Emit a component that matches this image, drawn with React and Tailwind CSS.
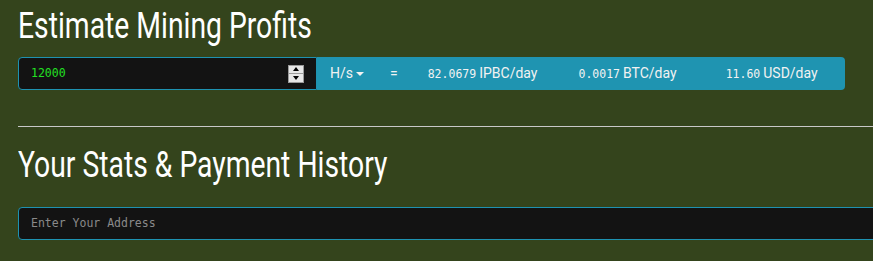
const MONO = "font-['DejaVu_Sans_Mono',monospace]"

function Spinner() {
    // old-style number spinner, drawn by hand
    return (
        <div className="flex flex-col w-[16px] h-[18px] border border-[#9a9a9a] bg-[#e6e6e6]">
            <div className="flex-1 flex items-center justify-center border-b border-[#9a9a9a]">
                <span className="w-0 h-0 border-x-[3px] border-x-transparent border-b-[4px] border-b-black" />
            </div>
            <div className="flex-1 flex items-center justify-center">
                <span className="w-0 h-0 border-x-[3px] border-x-transparent border-t-[4px] border-t-black" />
            </div>
        </div>
    )
}

function Amount({ value, unit, className = '' }) {
    return (
        <span className={`flex items-baseline ${className}`}>
            <span className={`${MONO} text-[11.5px] mr-[3px]`}>{value}</span>
            <span className="text-[14px]">{unit}</span>
        </span>
    )
}

export default function App() {
    return (
        <div className="w-full h-[261px] overflow-hidden bg-[#34441c] font-['Roboto',sans-serif] text-white">
            <div className="w-[900px] pl-[18px] pt-[6px]">
                <h1 className="text-[36px] leading-[40px] font-normal origin-left scale-x-[0.786] w-fit">
                    Estimate Mining Profits
                </h1>

                {/* estimate row */}
                <div className="mt-[11px] flex w-[827px] h-[33px]">
                    <div className="w-[299px] flex items-center justify-between bg-[#131313] border border-[#1e92b1] rounded-l-[4px] pl-[12px] pr-[12px]">
                        <span className={`${MONO} text-[11.5px] text-[#22e022]`}>12000</span>
                        <Spinner />
                    </div>
                    <div className="flex-1 flex items-center bg-[#1f94b1] rounded-r-[4px] text-[#f2f2f2]">
                        <span className="ml-[13px] flex items-center text-[14px]">
                            H/s
                            <span className="ml-[3px] w-0 h-0 border-x-[4px] border-x-transparent border-t-[4px] border-t-[#f2f2f2]" />
                        </span>
                        <span className="ml-[26px] text-[14px]">=</span>
                        <Amount value="82.0679" unit="IPBC/day" className="ml-[30px]" />
                        <Amount value="0.0017" unit="BTC/day" className="ml-[41px]" />
                        <Amount value="11.60" unit="USD/day" className="ml-[49px]" />
                    </div>
                </div>

                <hr className="mt-[36px] border-0 h-px bg-[#c8c8c8]" />

                <h2 className="mt-[18px] text-[36px] leading-[40px] font-normal origin-left scale-x-[0.786] w-fit">
                    Your Stats &amp; Payment History
                </h2>

                <div className="mt-[22px] h-[33px] flex items-center bg-[#131313] border border-[#1e92b1] rounded-[4px] pl-[12px]">
                    <span className={`${MONO} text-[11.5px] text-[#8a8a8a]`}>Enter Your Address</span>
                </div>
            </div>
        </div>
    )
}
